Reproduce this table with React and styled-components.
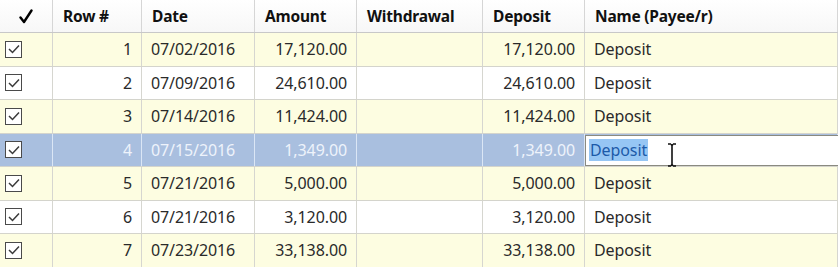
import React from "react";
import styled, { createGlobalStyle } from "styled-components";

const Global = createGlobalStyle`
  html, body { margin: 0; padding: 0; background: #fff; }
  body { font-family: "Noto Sans", "Open Sans", sans-serif; }
`;

const COLS = "53px 89px 113px 102px 126px 102px 1fr";

const Grid = styled.div`
  width: 838px;
  display: flex;
  flex-direction: column;
`;

const HeaderRow = styled.div`
  display: grid;
  grid-template-columns: ${COLS};
  height: 33px;
  background: linear-gradient(#ffffff, #f7f7f7);
  border-bottom: 1px solid #c8c8c8;
  box-sizing: border-box;
`;

const HeadCell = styled.div`
  display: flex;
  align-items: center;
  justify-content: ${(p) => (p.$center ? "center" : "flex-start")};
  padding-left: ${(p) => (p.$center ? "0" : "10px")};
  border-right: 1px solid #d6d6d6;
  font-weight: 700;
  font-size: 15.5px;
  color: #111;
  letter-spacing: -0.2px;
`;

const Row = styled.div`
  display: grid;
  grid-template-columns: ${COLS};
  height: 33.5px;
  box-sizing: border-box;
  border-bottom: 1px solid #d4d4cc;
  background: ${(p) => (p.$selected ? "#a9bfdf" : p.$alt ? "#fdfde1" : "#ffffff")};
  color: ${(p) => (p.$selected ? "#eef3fb" : "#2a2a2a")};
`;

const Cell = styled.div`
  display: flex;
  align-items: center;
  justify-content: ${(p) => (p.$align === "right" ? "flex-end" : "flex-start")};
  padding: ${(p) => (p.$align === "right" ? "0 9px 0 0" : "0 0 0 9px")};
  border-right: 1px solid ${(p) => (p.$selected ? "#dbe6f5" : "#d6d6d0")};
  font-size: 16px;
  letter-spacing: -0.1px;
  white-space: nowrap;
  position: relative;
  overflow: visible;
`;

const CheckCell = styled(Cell)`
  padding-left: 5px;
`;

const Box = styled.span`
  width: 17px;
  height: 17px;
  border: 1.6px solid #4a4a4a;
  background: #fff;
  box-sizing: border-box;
  display: flex;
  align-items: center;
  justify-content: center;
`;

const Editor = styled.div`
  position: absolute;
  left: 0;
  right: -2px;
  top: 1px;
  bottom: 0px;
  background: #fff;
  border: 1.5px solid #8a8a80;
  box-sizing: border-box;
  display: flex;
  align-items: center;
  padding-left: 3px;
  color: #222;
`;

const Selected = styled.span`
  background: #96c6f4;
  color: #1c5aa8;
  padding: 0 1px;
  line-height: 22px;
`;

const Cursor = styled.svg`
  position: absolute;
  left: 80px;
  top: 7px;
`;

const Check = () => (
  <Box>
    <svg width="12" height="10" viewBox="0 0 12 10">
      <path d="M1 5 L4.5 8.5 L11 1.5" fill="none" stroke="#3a3a3a" strokeWidth="1.5" />
    </svg>
  </Box>
);

const HeadCheck = () => (
  <svg width="14" height="15" viewBox="0 0 14 15">
    <path d="M1.5 8.5 L5 13 L12.5 1.5" fill="none" stroke="#000" strokeWidth="2.4" strokeLinecap="round" strokeLinejoin="round" />
  </svg>
);

const rows = [
  ["1", "07/02/2016", "17,120.00", "", "17,120.00", "Deposit"],
  ["2", "07/09/2016", "24,610.00", "", "24,610.00", "Deposit"],
  ["3", "07/14/2016", "11,424.00", "", "11,424.00", "Deposit"],
  ["4", "07/15/2016", "1,349.00", "", "1,349.00", "Deposit"],
  ["5", "07/21/2016", "5,000.00", "", "5,000.00", "Deposit"],
  ["6", "07/21/2016", "3,120.00", "", "3,120.00", "Deposit"],
  ["7", "07/23/2016", "33,138.00", "", "33,138.00", "Deposit"],
];

export default function App() {
  return (
    <>
      <Global />
      <Grid>
        <HeaderRow>
          <HeadCell $center>
            <HeadCheck />
          </HeadCell>
          <HeadCell>Row #</HeadCell>
          <HeadCell>Date</HeadCell>
          <HeadCell>Amount</HeadCell>
          <HeadCell>Withdrawal</HeadCell>
          <HeadCell>Deposit</HeadCell>
          <HeadCell>Name (Payee/r)</HeadCell>
        </HeaderRow>
        {rows.map((r, i) => {
          const sel = i === 3;
          const alt = i % 2 === 0;
          return (
            <Row key={r[0]} $alt={alt} $selected={sel}>
              <CheckCell $selected={sel}>
                <Check />
              </CheckCell>
              <Cell $align="right" $selected={sel}>{r[0]}</Cell>
              <Cell $selected={sel}>{r[1]}</Cell>
              <Cell $align="right" $selected={sel}>{r[2]}</Cell>
              <Cell $selected={sel}>{r[3]}</Cell>
              <Cell $align="right" $selected={sel}>{r[4]}</Cell>
              <Cell $selected={sel}>
                {sel ? (
                  <Editor>
                    <Selected>{r[5]}</Selected>
                    <Cursor width="12" height="24" viewBox="0 0 12 24">
                      <path d="M2 1 H5 M7 1 H10 M6 2 V22 M2 23 H5 M7 23 H10 M5 1.5 Q6 2 6 3 Q6 2 7 1.5 M5 22.5 Q6 22 6 21 Q6 22 7 22.5" stroke="#111" strokeWidth="1.6" fill="none" />
                    </Cursor>
                  </Editor>
                ) : (
                  r[5]
                )}
              </Cell>
            </Row>
          );
        })}
      </Grid>
    </>
  );
}
